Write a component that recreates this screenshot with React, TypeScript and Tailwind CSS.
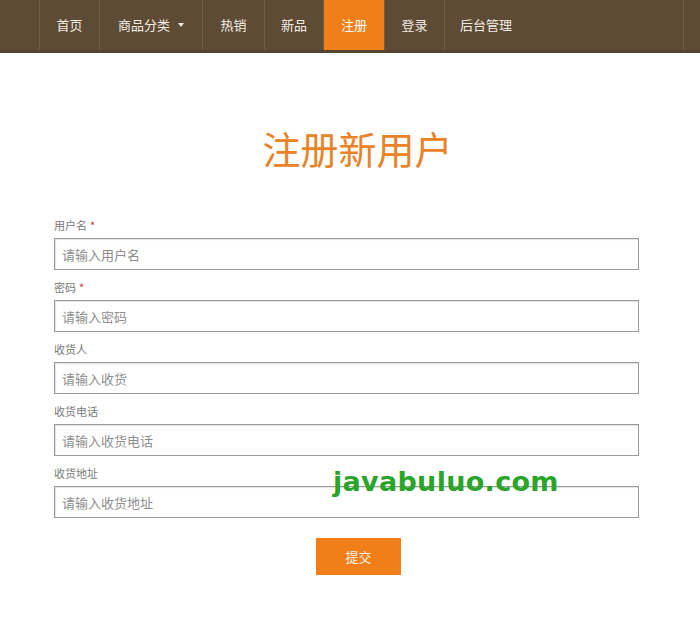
import React from "react";

const navItems = [
  { label: "首页", w: "w-[60px]" },
  { label: "商品分类", w: "w-[103px]", caret: true },
  { label: "热销", w: "w-[62px]" },
  { label: "新品", w: "w-[59px]" },
  { label: "注册", w: "w-[61px]", active: true },
  { label: "登录", w: "w-[60px]" },
  { label: "后台管理", w: "w-[239px]", left: true },
];

const fields = [
  { label: "用户名", placeholder: "请输入用户名", required: true },
  { label: "密码", placeholder: "请输入密码", required: true },
  { label: "收货人", placeholder: "请输入收货" },
  { label: "收货电话", placeholder: "请输入收货电话" },
  { label: "收货地址", placeholder: "请输入收货地址" },
];

export default function App() {
  return (
    <div
      className="relative h-[617px] w-[700px] bg-white"
      style={{ fontFamily: '"Noto Sans CJK SC", "Noto Sans", sans-serif' }}
    >
      <nav className="flex h-[53px] border-b-[3px] border-[#53432f] bg-[#5e4b35] pl-[39px]">
        {navItems.map((item) => (
          <div
            key={item.label}
            className={`flex items-center border-l border-[#6e5c45] text-[13px] text-[#f2ece4] ${item.w} ${
              item.left ? "pl-[15px]" : "justify-center"
            } ${item.active ? "bg-[#f07f1a] text-white" : ""}`}
          >
            {item.label}
            {item.caret && (
              <span className="ml-[8px] inline-block h-0 w-0 border-x-[3.5px] border-t-[4px] border-x-transparent border-t-[#f2ece4]" />
            )}
          </div>
        ))}
        <div className="w-[17px] border-l border-[#6e5c45]" />
      </nav>

      <h1 className="mt-[71px] pl-[15px] text-center text-[38px] leading-[48px] text-[#ea8228]">注册新用户</h1>

      <form className="ml-[54px] mt-[44px] w-[585px]">
        {fields.map((f) => (
          <div key={f.label} className="mb-[8px]">
            <label className="block h-[20px] text-[11px] leading-[18px] text-[#7a7a7a]">
              {f.label}
              {f.required && <span className="ml-[3px] text-[#d0303a]">*</span>}
            </label>
            <input
              className="mt-[2px] block h-[32px] w-full border border-[#9a9a9a] px-[7px] text-[13px] text-[#333] shadow-[inset_1px_1px_1px_rgba(0,0,0,0.12)] outline-none placeholder:text-[#8e8e8e]"
              placeholder={f.placeholder}
            />
          </div>
        ))}
        <div className="mt-[20px] flex justify-center pl-[24px]">
          <button
            type="button"
            className="h-[37px] w-[85px] bg-[#f07f1a] text-[13px] text-[#fdf1e3]"
          >
            提交
          </button>
        </div>
      </form>

      <div
        className="absolute left-[333px] top-[462px] text-[27px] font-bold tracking-[0.3px] text-[#2aa52a]"
        style={{ fontFamily: '"DejaVu Sans", sans-serif' }}
      >
        javabuluo.com
      </div>
    </div>
  );
}
